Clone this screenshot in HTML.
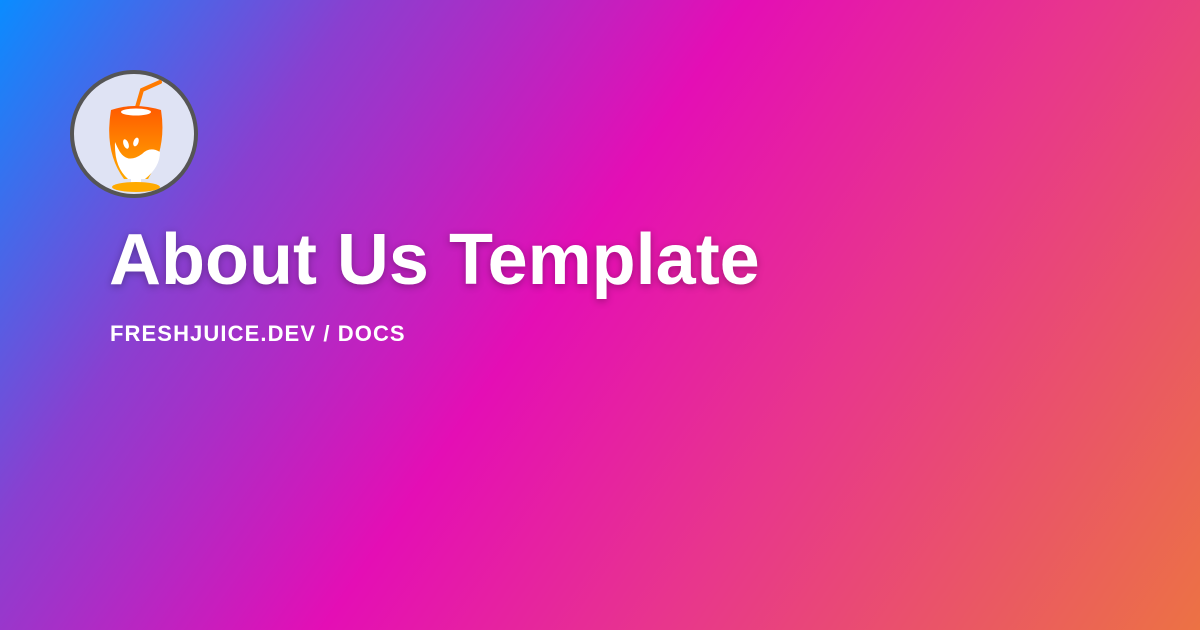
<!DOCTYPE html>
<html><head><style>
html,body{margin:0;padding:0}
body{width:1200px;height:630px;overflow:hidden;position:relative;font-family:"Liberation Sans",sans-serif;
background:linear-gradient(124deg,#0a8cff 0%,#8a3fd0 22%,#e40eb5 46%,#e8388a 68%,#ec7244 100%);}
.logo{position:absolute;left:70px;top:70px;width:120px;height:120px;border-radius:50%;border:4px solid #555;background:#dfe3f4;}
h1{position:absolute;left:109px;top:219px;margin:0;font-size:72px;font-weight:bold;color:#fff;text-shadow:0 2px 8px rgba(0,0,0,.3);}
.sub{position:absolute;left:110px;top:321px;font-size:22px;font-weight:bold;color:#fff;letter-spacing:1.1px}
</style></head><body>
<div class="logo">
<svg width="120" height="120" viewBox="72 72 120 120" style="position:absolute;left:0;top:0">
<defs><linearGradient id="g" x1="0" y1="0" x2="0" y2="1"><stop offset="0" stop-color="#ff5a00"/><stop offset="1" stop-color="#ffaa00"/></linearGradient></defs>
<path d="M133 112 L140 88 L158 80" stroke="#ff7a00" stroke-width="4" fill="none" stroke-linecap="round"/>
<path d="M109 108 Q132 100 159 108 Q165 145 146 177 L122 177 Q102 150 109 108Z" fill="url(#g)"/>
<ellipse cx="134" cy="110" rx="15" ry="3.5" fill="#fff"/>
<path d="M113 140 Q112 165 126 177 L143 177 Q158 165 158 150 Q148 144 140 152 Q126 162 118 150 Q115 145 113 140Z" fill="#fff"/>
<ellipse cx="124" cy="142" rx="2.5" ry="5" fill="#fff" transform="rotate(-20 124 142)"/><ellipse cx="134" cy="140" rx="2.5" ry="4.5" fill="#fff" transform="rotate(20 134 140)"/>
<rect x="129" y="176" width="10" height="8" fill="#fff"/>
<ellipse cx="134" cy="185" rx="24" ry="5" fill="#ffaa00"/>
</svg></div>
<h1>About Us Template</h1>
<div class="sub">FRESHJUICE.DEV / DOCS</div>
</body></html>
